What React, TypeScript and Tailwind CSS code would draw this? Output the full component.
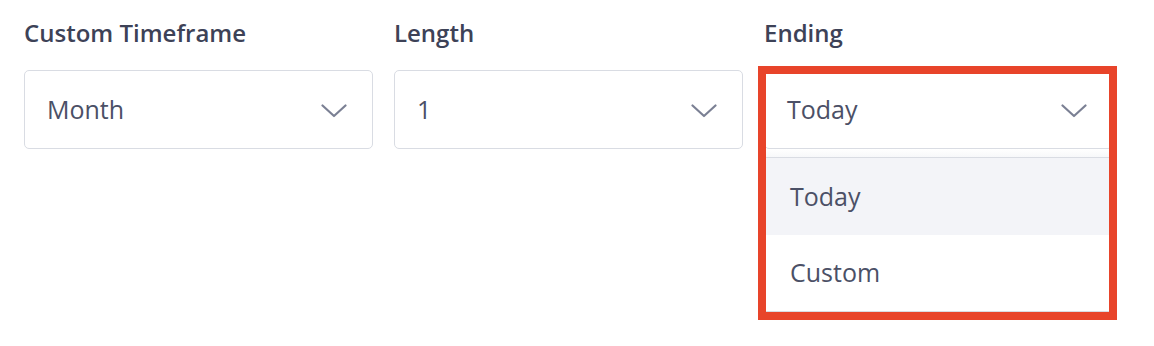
import React from 'react';

const Chevron: React.FC = () => (
  <svg width="26" height="14" viewBox="0 0 26 14" fill="none" className="text-[#7b8094] mt-[3px]">
    <path d="M1.5 1.5 L13 12 L24.5 1.5" stroke="currentColor" strokeWidth="2.2" strokeLinecap="round" strokeLinejoin="round" />
  </svg>
);

const Field: React.FC<{ label: string; value: string; children?: React.ReactNode }> = ({ label, value, children }) => (
  <div className="flex flex-col w-[349px]">
    <div className="h-[70px] pt-[17px] text-[24px] leading-[32px] font-semibold text-[#3d4257]">{label}</div>
    <div className="relative">
      <div className="h-[79px] flex items-center justify-between pl-[22px] pr-[25px] border-[1.5px] border-[#d9dce3] rounded-[5px] bg-white text-[25px] text-[#4b5066]">
        <span>{value}</span>
        <Chevron />
      </div>
      {children}
    </div>
  </div>
);

export default function App() {
  return (
    <div className="w-[1154px] h-[346px] bg-white" style={{ fontFamily: '"Open Sans", "Liberation Sans", sans-serif' }}>
      <div className="flex gap-[21px] pl-[24px]">
        <Field label="Custom Timeframe" value="Month" />
        <Field label="Length" value="1" />
        <Field label="Ending" value="Today">
          <div className="border-x-[1.5px] border-b-[1.5px] border-[#d9dce3] bg-white">
            <div className="h-[9px] bg-gradient-to-b from-white to-[#f7f8fa] border-b-[1.5px] border-[#d9dce3]" />
            <div className="h-[77px] flex items-center pl-[25px] bg-[#f3f4f8] text-[25px] text-[#4b5066]">Today</div>
            <div className="h-[76px] flex items-center pl-[25px] text-[25px] text-[#4b5066]">Custom</div>
          </div>
          <div className="absolute left-[-6px] right-[-4px] top-[-4px] bottom-[-8px] border-[8px] border-[#e8442a] pointer-events-none" />
        </Field>
      </div>
    </div>
  );
}
